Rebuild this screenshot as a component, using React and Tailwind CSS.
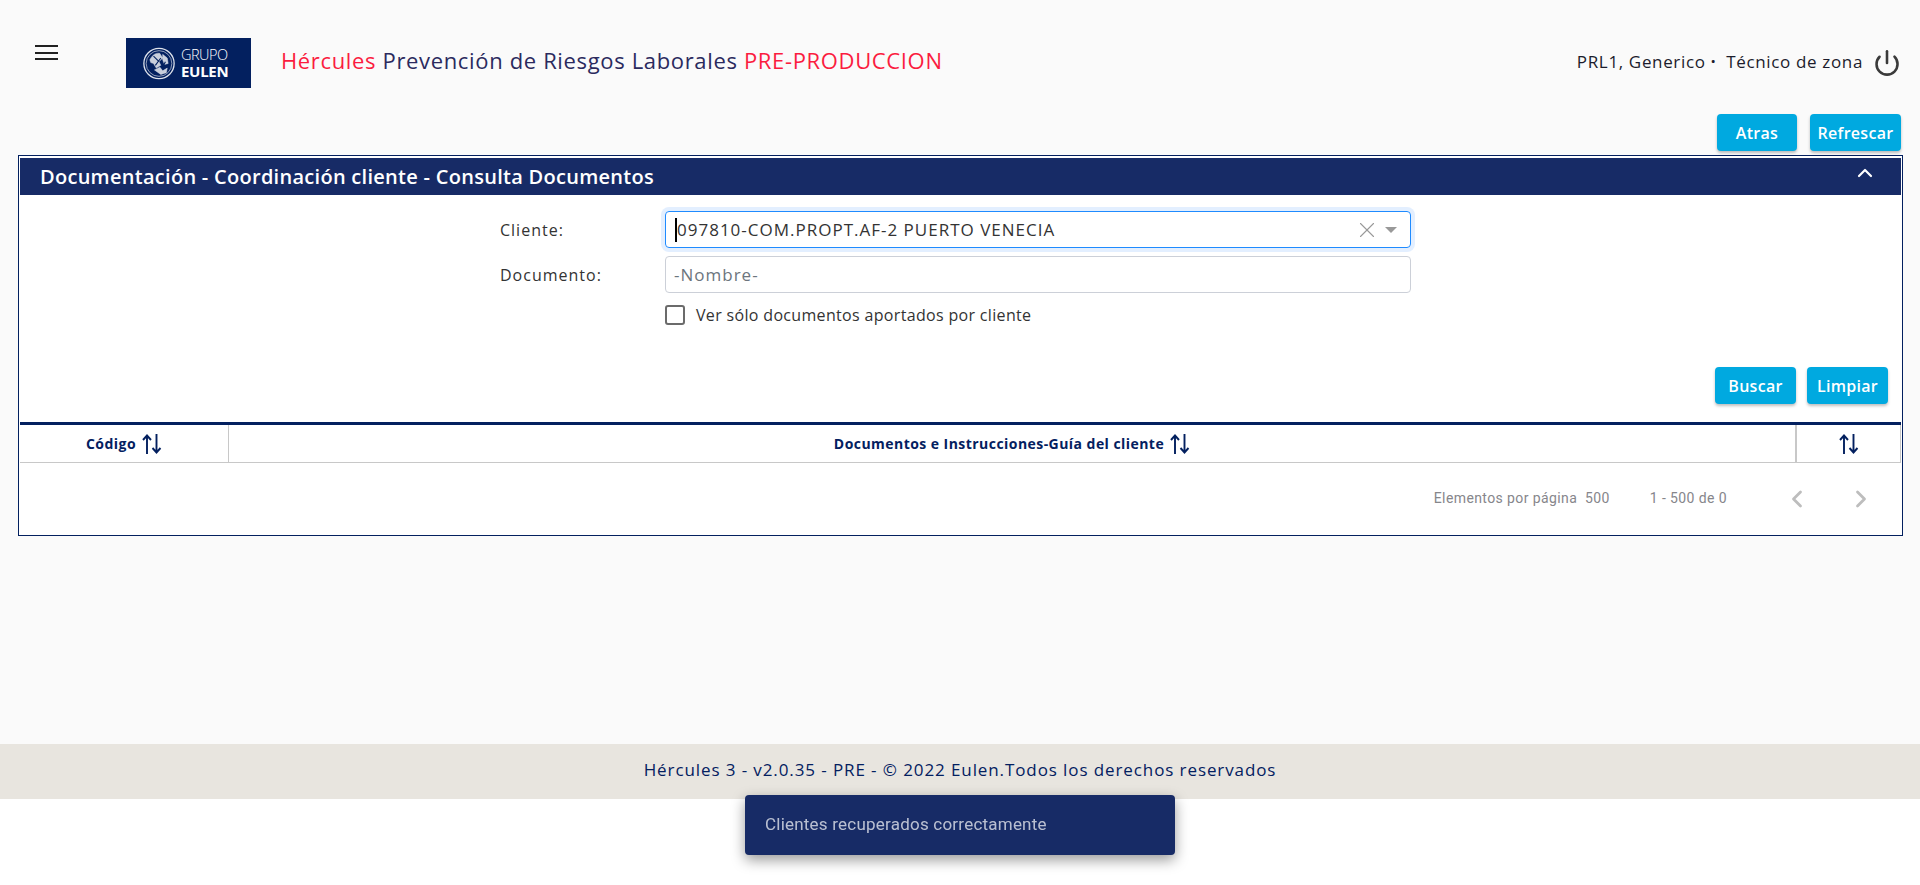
import { ChevronUp, ChevronLeft, ChevronRight, Power, X } from "lucide-react";

function SortIcon() {
  return (
    <svg viewBox="0 0 20 20" className="h-[20px] w-[20px]" fill="none" stroke="#03205f" strokeWidth="1.9">
      <path d="M5 20V1.5M1 6l4-4.5L9 6" />
      <path d="M14.5 0v18.5M10.5 14l4 4.5 4-4.5" />
    </svg>
  );
}

function Logo() {
  return (
    <div className="flex h-[50px] w-[125px] items-center gap-[5px] bg-[#03205f] pl-[16px] text-white">
      <svg viewBox="0 0 36 36" className="h-[33px] w-[34px]" fill="none" stroke="#dfe3ec">
        <circle cx="18" cy="18" r="16.5" strokeWidth="1.4" />
        <circle cx="18" cy="18" r="14" strokeWidth="0.7" />
        <path d="M8 14c3-6 7-8 11-7l3 5-4 4 2 4-5 3-3-5-3-1zM22 8l5 4 1 6-4 1-2-5zM13 25l6-3 3 4 5-3-1 5-6 2z" fill="#c9cfdc" strokeWidth="0.5" />
        <path d="M12 10l6 6M20 12l-6 8M22 22l3-6" stroke="#03205f" strokeWidth="1.2" />
      </svg>
      <div className="font-['Open_Sans',sans-serif] leading-[16px]">
        <div className="text-[14.5px] font-light tracking-[-0.5px]">GRUPO</div>
        <div className="text-[15px] font-bold tracking-[-0.3px]">EULEN</div>
      </div>
    </div>
  );
}

function Btn({ children, className }) {
  return (
    <button className={"h-[37px] rounded bg-[#00a9e0] font-['Open_Sans',sans-serif] text-[16px] font-semibold tracking-[0.3px] text-white shadow-[0_2px_3px_rgba(0,0,0,0.25)] " + className}>
      {children}
    </button>
  );
}

export default function App() {
  return (
    <div className="flex min-h-[885px] flex-col bg-white font-['Open_Sans',sans-serif]">
      <div className="h-[744px] bg-[#fafafa]">
        <header className="flex h-[114px] items-start">
          <button className="ml-[35px] mt-[45px] flex h-[15px] w-[23px] flex-col justify-between">
            <span className="block h-[2px] w-full bg-[#212121]"></span>
            <span className="block h-[2px] w-full bg-[#212121]"></span>
            <span className="block h-[2px] w-full bg-[#212121]"></span>
          </button>
          <div className="ml-[68px] mt-[38px]">
            <Logo />
          </div>
          <div className="ml-[30px] mt-[45px] text-[22px] leading-[30px] tracking-[0.65px] text-[#2b2a5e]">
            <span className="text-[#fb1c3f]">Hércules</span> Prevención de Riesgos Laborales{" "}
            <span className="text-[#fb1c3f]">PRE-PRODUCCION</span>
          </div>
          <div className="ml-auto mr-[19px] mt-[49px] flex items-center">
            <span className="mb-[2px] text-[17px] leading-[26px] tracking-[0.65px] text-[#1c1c2c]">PRL1, Generico&nbsp;<b>·</b>&nbsp; Técnico de zona</span>
            <Power className="ml-[10px] h-[28px] w-[28px] text-[#3a3a3a]" strokeWidth={2.2} />
          </div>
        </header>

        <div className="mr-[19px] flex h-[41px] items-start justify-end gap-[13px]">
          <Btn className="w-[80px]">Atras</Btn>
          <Btn className="w-[91px]">Refrescar</Btn>
        </div>

        <section className="ml-[18px] mr-[17px] h-[381px] border border-[#03205f] bg-white px-px pt-[2px]">
          <div className="flex h-[37px] items-center bg-[#172b66] pl-[20px] text-white">
            <span className="text-[20px] font-semibold tracking-[0.28px]">Documentación - Coordinación cliente - Consulta Documentos</span>
            <ChevronUp className="mb-[8px] ml-auto mr-[24px] h-[24px] w-[24px]" strokeWidth={2.2} />
          </div>

          <div className="relative h-[230px] border-b-[3px] border-[#03205f]">
            <div className="ml-[480px] w-[911px] pt-[16px]">
              <div className="flex items-center">
                <label className="w-[165px] text-[16px] tracking-[1px] text-[#333]">Cliente:</label>
                <div className="flex h-[37px] flex-1 items-center rounded border border-[#1f8bff] pl-[9px] pr-[13px] shadow-[0_0_0_4px_rgba(38,132,255,0.13)]">
                  <span className="h-[24px] w-[2px] bg-black"></span>
                  <span className="text-[17px] tracking-[1px] text-[#333]">097810-COM.PROPT.AF-2 PUERTO VENECIA</span>
                  <X className="ml-auto h-[26px] w-[26px] text-[#999]" strokeWidth={1} />
                  <span className="ml-[5px] h-0 w-0 border-x-[6px] border-t-[6px] border-x-transparent border-t-[#999]"></span>
                </div>
              </div>
              <div className="mt-[8px] flex items-center">
                <label className="w-[165px] text-[16px] tracking-[1px] text-[#333]">Documento:</label>
                <input
                  placeholder="-Nombre-"
                  className="h-[37px] flex-1 rounded border border-[#ccd0d8] px-[8px] text-[17px] tracking-[1px] placeholder:text-[#6c757d]"
                />
              </div>
              <div className="ml-[165px] mt-[10px] flex items-center">
                <span className="h-[20px] w-[20px] rounded-[3px] border-2 border-[#6b6b6b] bg-white"></span>
                <span className="ml-[11px] text-[16px] tracking-[0.33px] text-[#333]">Ver sólo documentos aportados por cliente</span>
              </div>
            </div>
            <div className="absolute bottom-[18px] right-[13px] flex gap-[11px]">
              <Btn className="w-[81px]">Buscar</Btn>
              <Btn className="w-[81px]">Limpiar</Btn>
            </div>
          </div>

          <div className="flex h-[38px] border-b border-[#c8c8c8] text-[14px] font-bold tracking-[0.45px] text-[#03205f]">
            <div className="flex w-[209px] items-center justify-center gap-[6px] border-r border-[#c8c8c8]">
              Código <SortIcon />
            </div>
            <div className="flex flex-1 items-center justify-center gap-[6px] border-r-2 border-[#c8c8c8]">
              Documentos e Instrucciones-Guía del cliente <SortIcon />
            </div>
            <div className="flex w-[104px] items-center justify-center border-r border-[#c8c8c8]">
              <SortIcon />
            </div>
          </div>

          <div className="flex h-[71px] items-center font-['Roboto',sans-serif] text-[14px] tracking-[0.4px] text-[#86868b]">
            <span className="ml-auto">Elementos por página&nbsp; 500</span>
            <span className="ml-[40px]">1 - 500 de 0</span>
            <ChevronLeft className="ml-[56px] h-[28px] w-[28px] text-[#bdbdbd]" strokeWidth={2.4} />
            <ChevronRight className="ml-[36px] mr-[26px] h-[28px] w-[28px] text-[#bdbdbd]" strokeWidth={2.4} />
          </div>
        </section>
      </div>

      <footer className="flex h-[55px] items-center justify-center bg-[#e8e5df] pb-[3px] text-[17px] tracking-[0.9px] text-[#03205f]">
        Hércules 3 - v2.0.35 - PRE - © 2022 Eulen.Todos los derechos reservados
      </footer>

      <div className="fixed bottom-[30px] left-[745px] flex h-[60px] w-[430px] items-center rounded bg-[#172b66] pl-[20px] font-['Roboto',sans-serif] text-[17px] tracking-[0.22px] text-white/70 shadow-[0_5px_14px_rgba(0,0,0,0.4)]">
        Clientes recuperados correctamente
      </div>
    </div>
  );
}
